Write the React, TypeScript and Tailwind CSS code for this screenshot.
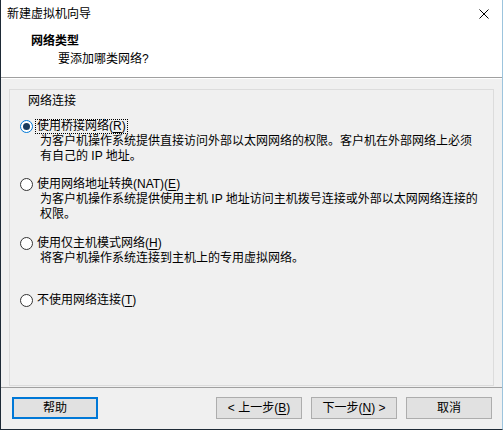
const font = { fontFamily: '"Liberation Sans","Noto Sans CJK SC",sans-serif' };

function Radio({ checked }: { checked?: boolean }) {
  return (
    <span
      className={
        "flex h-[13px] w-[13px] shrink-0 items-center justify-center rounded-full border bg-white " +
        (checked ? "border-[#0078d7]" : "border-[#333333]")
      }
    >
      {checked && <span className="h-[7px] w-[7px] rounded-full bg-[#1a3b5c]" />}
    </span>
  );
}

function Option({
  label,
  hotkey,
  suffix,
  checked,
  focused,
  lines,
  className,
}: {
  label: string;
  hotkey: string;
  suffix?: string;
  checked?: boolean;
  focused?: boolean;
  lines?: string[];
  className?: string;
}) {
  return (
    <div className={className}>
      <div className="flex h-[15px] items-center">
        <Radio checked={checked} />
        <span
          className={
            "ml-[2px] px-[1px] leading-[13px] " +
            (focused ? "border border-dotted border-black" : "border border-transparent")
          }
        >
          {label}(<u className="underline-offset-2">{hotkey}</u>){suffix}
        </span>
      </div>
      {lines && (
        <div className="pl-[20px]">
          {lines.map((l) => (
            <div key={l} className="leading-[15px]">
              {l}
            </div>
          ))}
        </div>
      )}
    </div>
  );
}

function Button({ children, primary }: { children: React.ReactNode; primary?: boolean }) {
  return (
    <button
      type="button"
      className={
        "flex h-[22px] w-[86px] items-center justify-center bg-[#e1e1e1] text-[12px] text-black " +
        (primary ? "border-2 border-[#0078d7]" : "border border-[#adadad]")
      }
    >
      {children}
    </button>
  );
}

export default function App() {
  return (
    <div
      style={font}
      className="flex h-[430px] w-[503px] flex-col border-b border-l border-r border-b-[#1e2a36] border-l-[#1e2a36] border-r-[#9cc4dd] bg-[#f0f0f0] text-[12px] text-black"
    >
      {/* title bar + header */}
      <div className="h-[77px] bg-white">
        <div className="flex h-[28px] items-center justify-between pl-[6px] pr-[12px]">
          <span className="leading-[15px]">新建虚拟机向导</span>
          <svg width="10" height="10" viewBox="0 0 10 10" className="mr-[1px]">
            <path d="M0.5 0.5 L9.5 9.5 M9.5 0.5 L0.5 9.5" stroke="#000" strokeWidth="1" />
          </svg>
        </div>
        <div className="pl-[30px] pt-[6px]">
          <div className="font-bold leading-[15px]">网络类型</div>
          <div className="mt-[3px] pl-[27px] leading-[15px]">要添加哪类网络?</div>
        </div>
      </div>
      <div className="h-px bg-[#a0a0a0]" />
      <div className="h-px bg-white" />

      {/* body */}
      <div className="flex flex-1 flex-col px-[8px] pt-[10px] pb-[1px]">
        <div className="flex-1 border border-[#dcdcdc] pl-[10px] pt-[4px]">
          <div className="pl-[8px] leading-[15px]">网络连接</div>
          <Option
            className="mt-[10px]"
            label="使用桥接网络"
            hotkey="R"
            checked
            focused
            lines={[
              "为客户机操作系统提供直接访问外部以太网网络的权限。客户机在外部网络上必须",
              "有自己的 IP 地址。",
            ]}
          />
          <Option
            className="mt-[13px]"
            label="使用网络地址转换(NAT)"
            hotkey="E"
            lines={[
              "为客户机操作系统提供使用主机 IP 地址访问主机拨号连接或外部以太网网络连接的",
              "权限。",
            ]}
          />
          <Option
            className="mt-[14px]"
            label="使用仅主机模式网络"
            hotkey="H"
            lines={["将客户机操作系统连接到主机上的专用虚拟网络。"]}
          />
          <Option className="mt-[27px]" label="不使用网络连接" hotkey="T" />
        </div>
      </div>

      {/* footer */}
      <div className="h-px bg-[#a0a0a0]" />
      <div className="flex h-[41px] items-start pl-[11px] pr-[10px] pt-[9px]">
        <Button primary>帮助</Button>
        <div className="flex-1" />
        <Button>
          &lt; 上一步(<u className="underline-offset-2">B</u>)
        </Button>
        <div className="ml-[9px]">
          <Button>
            下一步(<u className="underline-offset-2">N</u>) &gt;
          </Button>
        </div>
        <div className="ml-[9px]">
          <Button>取消</Button>
        </div>
      </div>
    </div>
  );
}
